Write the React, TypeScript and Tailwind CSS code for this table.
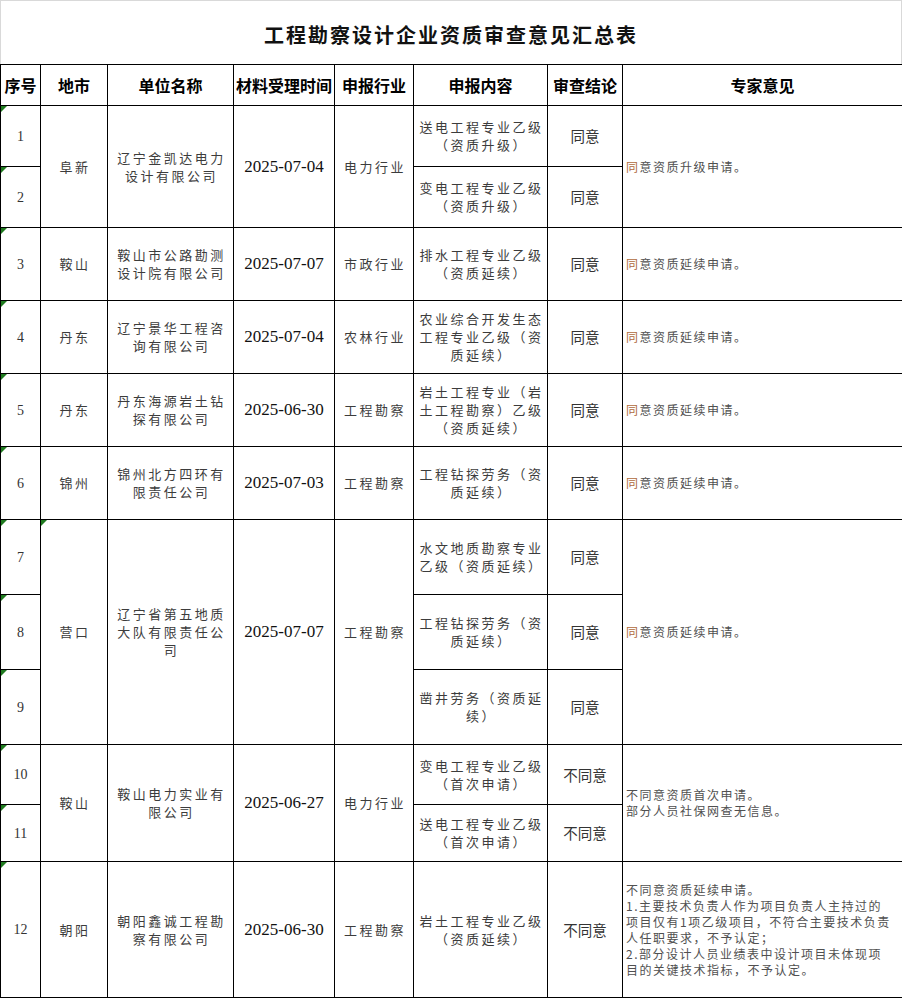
const cjk = "font-['Noto_Sans_CJK_SC','Noto_Sans',sans-serif]";
const serif = "font-['Liberation_Serif','Noto_Sans_CJK_SC',serif]";

type Row = {
  no: string;
  h: string;
  city?: { text: string; span: number; mark?: boolean };
  name?: { lines: string[]; span: number };
  date?: { text: string; span: number };
  trade?: { text: string; span: number };
  content: string[];
  verdict: string;
  opinion?: { lines: string[]; span: number; accent?: boolean };
};

const rows: Row[] = [
  {
    no: '1', h: 'h-[61px]',
    city: { text: '阜新', span: 2 },
    name: { lines: ['辽宁金凯达电力', '设计有限公司'], span: 2 },
    date: { text: '2025-07-04', span: 2 },
    trade: { text: '电力行业', span: 2 },
    content: ['送电工程专业乙级', '（资质升级）'], verdict: '同意',
    opinion: { lines: ['同意资质升级申请。'], span: 2, accent: true },
  },
  { no: '2', h: 'h-[61px]', content: ['变电工程专业乙级', '（资质升级）'], verdict: '同意' },
  {
    no: '3', h: 'h-[73px]',
    city: { text: '鞍山', span: 1 },
    name: { lines: ['鞍山市公路勘测', '设计院有限公司'], span: 1 },
    date: { text: '2025-07-07', span: 1 },
    trade: { text: '市政行业', span: 1 },
    content: ['排水工程专业乙级', '（资质延续）'], verdict: '同意',
    opinion: { lines: ['同意资质延续申请。'], span: 1, accent: true },
  },
  {
    no: '4', h: 'h-[73px]',
    city: { text: '丹东', span: 1 },
    name: { lines: ['辽宁景华工程咨', '询有限公司'], span: 1 },
    date: { text: '2025-07-04', span: 1 },
    trade: { text: '农林行业', span: 1 },
    content: ['农业综合开发生态', '工程专业乙级（资', '质延续）'], verdict: '同意',
    opinion: { lines: ['同意资质延续申请。'], span: 1, accent: true },
  },
  {
    no: '5', h: 'h-[73px]',
    city: { text: '丹东', span: 1 },
    name: { lines: ['丹东海源岩土钻', '探有限公司'], span: 1 },
    date: { text: '2025-06-30', span: 1 },
    trade: { text: '工程勘察', span: 1 },
    content: ['岩土工程专业（岩', '土工程勘察）乙级', '（资质延续）'], verdict: '同意',
    opinion: { lines: ['同意资质延续申请。'], span: 1, accent: true },
  },
  {
    no: '6', h: 'h-[73px]',
    city: { text: '锦州', span: 1 },
    name: { lines: ['锦州北方四环有', '限责任公司'], span: 1 },
    date: { text: '2025-07-03', span: 1 },
    trade: { text: '工程勘察', span: 1 },
    content: ['工程钻探劳务（资', '质延续）'], verdict: '同意',
    opinion: { lines: ['同意资质延续申请。'], span: 1, accent: true },
  },
  {
    no: '7', h: 'h-[75px]',
    city: { text: '营口', span: 3, mark: true },
    name: { lines: ['辽宁省第五地质', '大队有限责任公', '司'], span: 3 },
    date: { text: '2025-07-07', span: 3 },
    trade: { text: '工程勘察', span: 3 },
    content: ['水文地质勘察专业', '乙级（资质延续）'], verdict: '同意',
    opinion: { lines: ['同意资质延续申请。'], span: 3, accent: true },
  },
  { no: '8', h: 'h-[75px]', content: ['工程钻探劳务（资', '质延续）'], verdict: '同意' },
  { no: '9', h: 'h-[75px]', content: ['凿井劳务（资质延', '续）'], verdict: '同意' },
  {
    no: '10', h: 'h-[60px]',
    city: { text: '鞍山', span: 2 },
    name: { lines: ['鞍山电力实业有', '限公司'], span: 2 },
    date: { text: '2025-06-27', span: 2 },
    trade: { text: '电力行业', span: 2 },
    content: ['变电工程专业乙级', '（首次申请）'], verdict: '不同意',
    opinion: { lines: ['不同意资质首次申请。', '部分人员社保网查无信息。'], span: 2 },
  },
  { no: '11', h: 'h-[57px]', content: ['送电工程专业乙级', '（首次申请）'], verdict: '不同意' },
  {
    no: '12', h: 'h-[136px]',
    city: { text: '朝阳', span: 1 },
    name: { lines: ['朝阳鑫诚工程勘', '察有限公司'], span: 1 },
    date: { text: '2025-06-30', span: 1 },
    trade: { text: '工程勘察', span: 1 },
    content: ['岩土工程专业乙级', '（资质延续）'], verdict: '不同意',
    opinion: {
      lines: [
        '不同意资质延续申请。',
        '1.主要技术负责人作为项目负责人主持过的',
        '项目仅有1项乙级项目，不符合主要技术负责',
        '人任职要求，不予认定；',
        '2.部分设计人员业绩表中设计项目未体现项',
        '目的关键技术指标，不予认定。',
      ],
      span: 1,
    },
  },
];

// small green "number stored as text" flag, like the spreadsheet shows
function Mark() {
  return <span className="absolute left-0 top-0 w-0 h-0 border-t-[6px] border-r-[6px] border-t-[#1f7a1f] border-r-transparent" />;
}

const td = 'border border-black align-middle text-center p-0';
const spaced = `${cjk} text-[13px] tracking-[2.5px] leading-[18px] text-[#3c3c3c]`;

export default function App() {
  return (
    <div className={`w-[902px] bg-white ${cjk}`}>
      <div className="h-[64px] border border-b-0 border-[#d9d9d9] flex items-center justify-center">
        <h1 className="text-[20px] font-bold tracking-[2px] text-[#111] pt-1">工程勘察设计企业资质审查意见汇总表</h1>
      </div>
      <table className="w-[902px] table-fixed border-collapse">
        <colgroup>
          <col className="w-[40px]" />
          <col className="w-[67px]" />
          <col className="w-[126px]" />
          <col className="w-[101px]" />
          <col className="w-[79px]" />
          <col className="w-[134px]" />
          <col className="w-[75px]" />
          <col className="w-[280px]" />
        </colgroup>
        <thead>
          <tr className="h-[41px] text-[16px] font-bold text-black">
            {['序号', '地市', '单位名称', '材料受理时间', '申报行业', '申报内容', '审查结论', '专家意见'].map(t => (
              <th key={t} className={`${td} font-bold whitespace-nowrap`}>{t}</th>
            ))}
          </tr>
        </thead>
        <tbody>
          {rows.map(r => (
            <tr key={r.no} className={r.h}>
              <td className={`${td} relative ${serif} text-[14px] text-[#333]`}>
                <Mark />
                {r.no}
              </td>
              {r.city && (
                <td rowSpan={r.city.span} className={`${td} relative ${spaced} pl-[2px]`}>
                  {r.city.mark && <Mark />}
                  {r.city.text}
                </td>
              )}
              {r.name && (
                <td rowSpan={r.name.span} className={`${td} ${spaced} pl-[2px]`}>
                  {r.name.lines.map((l, i) => <div key={i}>{l}</div>)}
                </td>
              )}
              {r.date && (
                <td rowSpan={r.date.span} className={`${td} ${serif} text-[17px] text-[#111]`}>
                  {r.date.text}
                </td>
              )}
              {r.trade && (
                <td rowSpan={r.trade.span} className={`${td} ${spaced} pl-[2px]`}>
                  {r.trade.text}
                </td>
              )}
              <td className={`${td} ${spaced} pl-[2px]`}>
                {r.content.map((l, i) => <div key={i}>{l}</div>)}
              </td>
              <td className={`${td} ${cjk} text-[14.5px] text-[#333]`}>{r.verdict}</td>
              {r.opinion && (
                <td rowSpan={r.opinion.span} className={`${td} text-left pl-[3px] ${cjk} text-[12px] tracking-[1.5px] leading-[16px] text-[#505050]`}>
                  {r.opinion.lines.map((l, i) => (
                    <div key={i} className="whitespace-nowrap">
                      {r.opinion!.accent && i === 0 ? <><span className="text-[#b06a3c]">{l[0]}</span>{l.slice(1)}</> : l}
                    </div>
                  ))}
                </td>
              )}
            </tr>
          ))}
        </tbody>
      </table>
    </div>
  );
}
